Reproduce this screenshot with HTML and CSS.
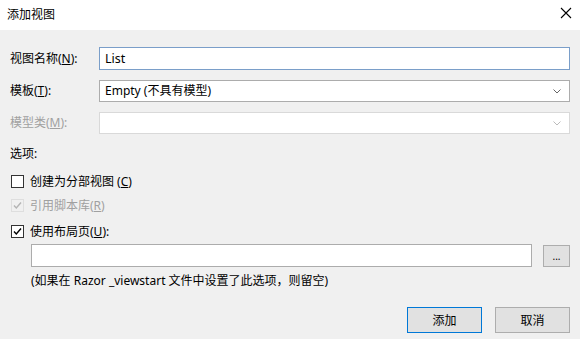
FILE: index.html
```html
<!doctype html>
<html lang="zh-CN">
<head>
    <meta charset="UTF-8">
    <title>添加视图</title>
    <link rel="stylesheet" href="styles.css">
</head>
<body>
<div class="dialog">
    <div class="titlebar">
        <span class="title">添加视图</span>
        <svg class="close" width="12" height="12" viewBox="0 0 12 12">
            <path d="M1 1 L11 11 M11 1 L1 11" stroke="#000" stroke-width="1.1" fill="none"/>
        </svg>
    </div>

    <div class="content">
        <div class="fields">
            <label class="lbl">视图名称(<u>N</u>):</label>
            <div class="input focused">List</div>

            <label class="lbl">模板(<u>T</u>):</label>
            <div class="input select">
                <span>Empty (不具有模型)</span>
                <svg width="8" height="5" viewBox="0 0 8 5"><path d="M0.5 0.5 L4 4 L7.5 0.5" stroke="#666" fill="none"/></svg>
            </div>

            <label class="lbl disabled">模型类(<u>M</u>):</label>
            <div class="input select off">
                <span></span>
                <svg width="8" height="5" viewBox="0 0 8 5"><path d="M0.5 0.5 L4 4 L7.5 0.5" stroke="#bbb" fill="none"/></svg>
            </div>
        </div>

        <div class="section">选项:</div>

        <div class="check-row">
            <span class="box"></span>
            <span>创建为分部视图 (<u>C</u>)</span>
        </div>
        <div class="check-row disabled">
            <span class="box off">
                <svg width="11" height="11" viewBox="0 0 11 11"><path d="M2 5.5 L4.3 8 L9 2.5" stroke="#b4b4b4" stroke-width="1.4" fill="none"/></svg>
            </span>
            <span>引用脚本库(<u>R</u>)</span>
        </div>
        <div class="check-row third">
            <span class="box">
                <svg width="11" height="11" viewBox="0 0 11 11"><path d="M2 5.5 L4.3 8 L9 2.5" stroke="#000" stroke-width="1.4" fill="none"/></svg>
            </span>
            <span>使用布局页(<u>U</u>):</span>
        </div>

        <div class="layout-row">
            <div class="input grow"></div>
            <button class="btn small">...</button>
        </div>
        <div class="hint">(如果在 Razor _viewstart 文件中设置了此选项，则留空)</div>

        <div class="actions">
            <button class="btn primary">添加</button>
            <button class="btn">取消</button>
        </div>
    </div>
</div>
</body>
</html>
```

FILE: styles.css
```css
body {
    margin: 0;
    font-family: 'Noto Sans', 'Noto Sans CJK SC', sans-serif;
    font-size: 12px;
    color: #000;
    background-color: #f0f0f0;
}

.dialog {
    width: 580px;
    height: 339px;
    overflow: hidden;
}

.titlebar {
    height: 30px;
    background-color: #ffffff;
    display: flex;
    align-items: center;
    justify-content: space-between;
    padding: 0 8px 0 7px;
}

.title {
    font-size: 12px;
    margin-top: -3px;
}

.close {
    margin-top: -4px;
}

.content {
    padding: 17px 10px 0 10px;
}

.fields {
    display: grid;
    grid-template-columns: 89px 1fr;
    grid-template-rows: 23px 22px 22px;
    row-gap: 10px;
    align-items: center;
}

.lbl {
    line-height: 16px;
}

.disabled {
    color: #a0a0a0;
}

.input {
    height: 100%;
    box-sizing: border-box;
    background: #ffffff;
    border: 1px solid #acacac;
    padding: 0 5px;
    display: flex;
    align-items: center;
    line-height: 16px;
}

.input.focused {
    border-color: #7a9ec9;
    font-size: 12.5px;
}

.select {
    justify-content: space-between;
    padding-right: 8px;
}

.select.off {
    border-color: #d9d9d9;
}

.section {
    margin-top: 12px;
    height: 16px;
    line-height: 16px;
}

.check-row {
    height: 24px;
    display: flex;
    align-items: center;
    gap: 6px;
    padding-left: 1px;
}

.check-row:first-of-type {
    margin-top: 7px;
}

.section + .check-row {
    margin-top: 7px;
}

.check-row.third {
    margin-top: 2px;
}

.box {
    width: 13px;
    height: 13px;
    box-sizing: border-box;
    border: 1px solid #333333;
    background: #ffffff;
    display: flex;
    align-items: center;
    justify-content: center;
}

.box.off {
    border-color: #dedede;
    background: #f0f0f0;
}

.layout-row {
    display: flex;
    align-items: center;
    gap: 11px;
    margin: 1px 0 0 21px;
    height: 23px;
}

.input.grow {
    flex: 1;
    height: 23px;
}

.btn {
    font-family: inherit;
    font-size: 12px;
    background-color: #e1e1e1;
    border: 1px solid #adadad;
    color: #000;
    width: 75px;
    height: 26px;
    padding: 0;
}

.btn.small {
    width: 27px;
    height: 22px;
    font-size: 10px;
    line-height: 10px;
}

.btn.primary {
    border-color: #0078d7;
}

.hint {
    margin: 6px 0 0 21px;
    height: 16px;
    line-height: 16px;
}

.actions {
    display: flex;
    justify-content: flex-end;
    gap: 13px;
    margin-top: 18px;
}
```
